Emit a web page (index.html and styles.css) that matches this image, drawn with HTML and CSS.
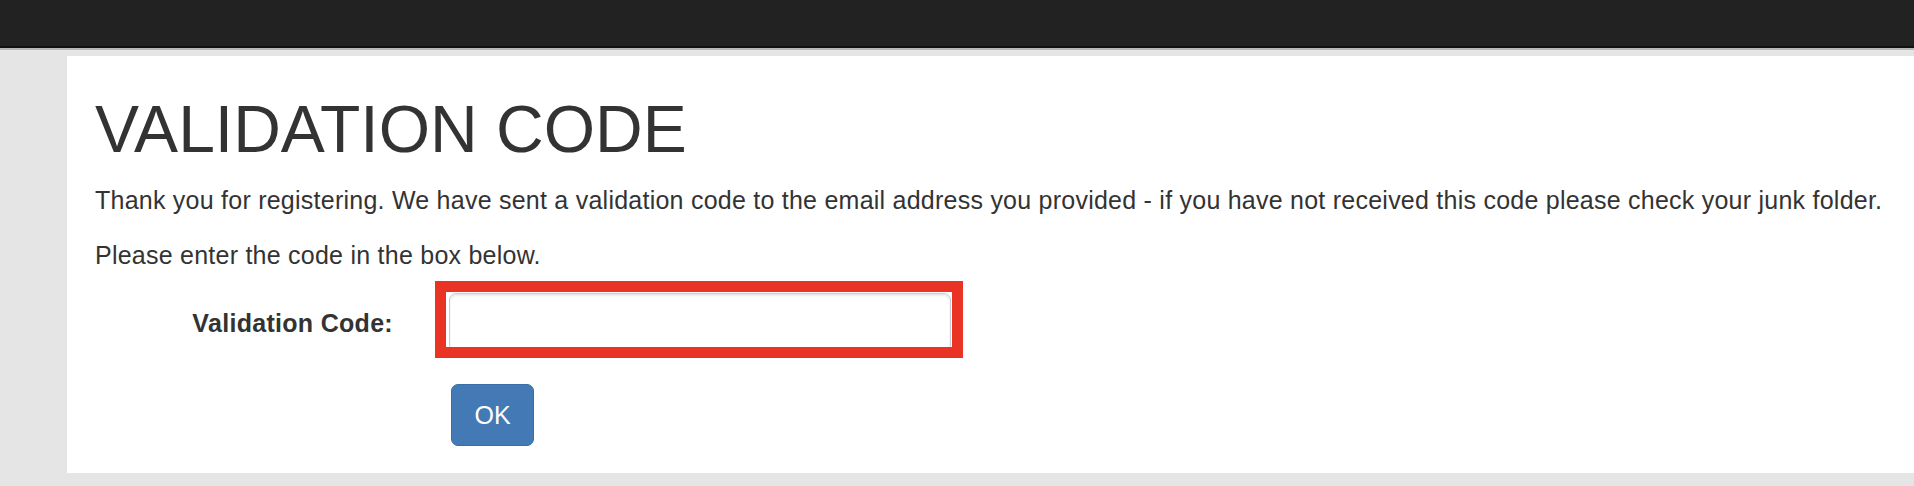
FILE: index.html
```html
<!DOCTYPE html>
<html lang="en">
<head>
<meta charset="utf-8">
<title>Validation Code</title>
<link rel="stylesheet" href="styles.css">
</head>
<body>
<header class="topbar"></header>
<main class="page">
  <section class="panel">
    <h1 class="title">VALIDATION CODE</h1>
    <p class="text">Thank you for registering. We have sent a validation code to the email address you provided - if you have not received this code please check your junk folder.</p>
    <p class="text">Please enter the code in the box below.</p>
    <form class="form" onsubmit="return false;">
      <div class="form-row">
        <label class="label" for="code">Validation Code:</label>
        <div class="field">
          <input class="input" id="code" type="text">
          <span class="highlight"></span>
        </div>
      </div>
      <div class="actions">
        <button class="btn" type="submit">OK</button>
      </div>
    </form>
  </section>
</main>
</body>
</html>
```

FILE: styles.css
```css
html, body {
  margin: 0;
  padding: 0;
}

body {
  background: #e5e5e5;
  font-family: "Liberation Sans", Arial, sans-serif;
  color: #333333;
  overflow: hidden;
}

.topbar {
  height: 46px;
  background: #222222;
  border-bottom: 2px solid #111111;
  box-shadow: 0 2px 0 #b8b8b8;
}

.page {
  padding: 8px 0 0 67px;
}

.panel {
  background: #ffffff;
  padding: 0 28px 27px 28px;
  overflow: hidden;
}

.title {
  margin: 37px 0 17.5px 0;
  font-size: 66px;
  line-height: 1.1;
  font-weight: 400;
  color: #333333;
  white-space: nowrap;
}

.text {
  margin: 0 0 20px 0;
  font-size: 25px;
  letter-spacing: 0.24px;
  line-height: 35px;
  white-space: nowrap;
}

.form {
  margin: 0;
}

.form-row {
  display: flex;
  align-items: flex-start;
}

.label {
  width: 298px;
  margin-right: 56px;
  padding-top: 13px;
  text-align: right;
  font-weight: 700;
  font-size: 25px;
  letter-spacing: 0.3px;
  line-height: 35px;
}

.field {
  position: relative;
  width: 502px;
  height: 59px;
}

.input {
  display: block;
  box-sizing: border-box;
  width: 100%;
  height: 59px;
  margin: 0;
  padding: 10px 21px;
  border: 1px solid #cccccc;
  border-radius: 7px;
  box-shadow: inset 0 2px 2px rgba(0, 0, 0, 0.09);
  background: #ffffff;
  font: inherit;
  font-size: 24.5px;
}

.highlight {
  position: absolute;
  left: -14px;
  top: -12px;
  width: 528px;
  height: 77px;
  box-sizing: border-box;
  border: 11.5px solid #e93324;
  pointer-events: none;
}

.actions {
  margin-top: 32px;
  padding-left: 356px;
}

.btn {
  display: block;
  box-sizing: border-box;
  width: 83px;
  height: 62px;
  margin: 0;
  padding: 0;
  background: #437ab5;
  border: 1px solid #3a6ea6;
  border-radius: 7px;
  color: #ffffff;
  font-family: "Liberation Sans", Arial, sans-serif;
  font-size: 25px;
  line-height: 35px;
  cursor: pointer;
}
```
